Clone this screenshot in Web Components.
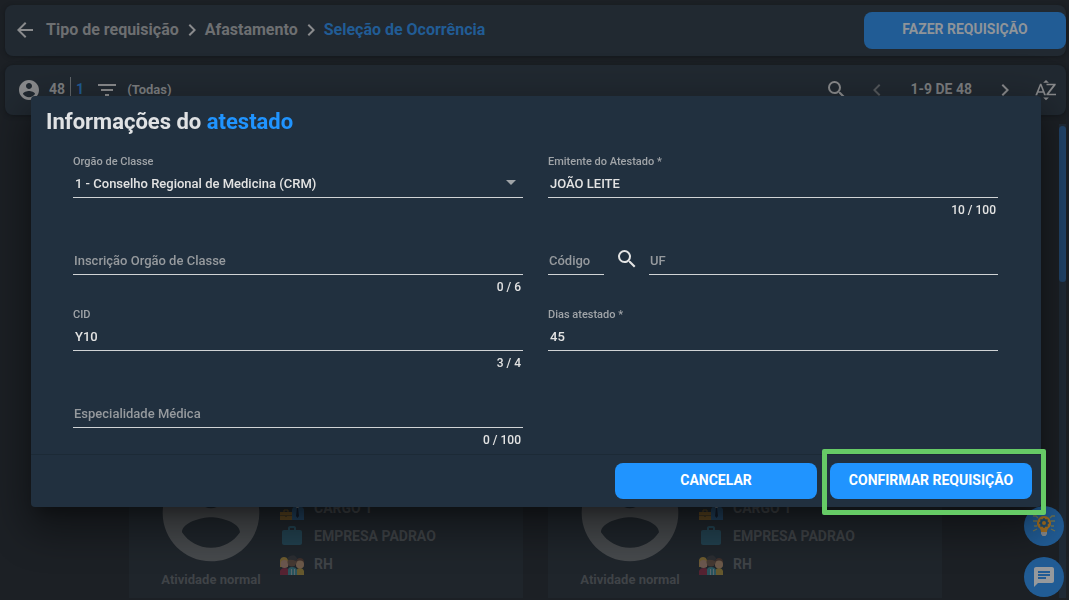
<!DOCTYPE html>
<html lang="pt-BR">
<head>
<meta charset="utf-8">
<meta name="viewport" content="width=device-width, initial-scale=1">
<title>Seleção de Ocorrência</title>
<style>
  html, body { margin: 0; height: 100%; overflow: hidden; background: #1c2025; }
  body {
    font-family: Roboto, "Liberation Sans", sans-serif;
    --bar: #212931; --muted: #6d6f71; --icon: #8a8b8d; --accent-dim: #215c95;
    --accent: #2094ff; --dialog: #21303f; --text: #e3e3e3;
  }
</style>
</head>
<body>
<app-page></app-page>
<script>
const define = (name, html, setup) => {
  const template = document.createElement('template');
  template.innerHTML = '<style>*{box-sizing:border-box}:host{display:block;box-sizing:border-box}button{font:inherit;cursor:pointer}</style>' + html;
  customElements.define(name, class extends HTMLElement {
    connectedCallback() {
      if (this.shadowRoot) return;
      this.attachShadow({ mode: 'open' }).append(template.content.cloneNode(true));
      if (setup) setup(this, this.shadowRoot);
    }
  });
};

const ICONS = {
  back: '<path d="M20 11H7.8l5.6-5.6L12 4l-8 8 8 8 1.4-1.4L7.8 13H20z"/>',
  right: '<path d="M10 6 8.6 7.4l4.6 4.6-4.6 4.6L10 18l6-6z"/>',
  left: '<path d="M15.4 7.4 14 6l-6 6 6 6 1.4-1.4L10.8 12z"/>',
  account: '<path d="M12 2C6.48 2 2 6.48 2 12s4.48 10 10 10 10-4.48 10-10S17.52 2 12 2zm0 3c1.66 0 3 1.34 3 3s-1.34 3-3 3-3-1.34-3-3 1.34-3 3-3zm0 14.2c-2.5 0-4.71-1.28-6-3.22.03-1.99 4-3.08 6-3.08 1.99 0 5.97 1.09 6 3.08-1.29 1.94-3.5 3.22-6 3.22z"/>',
  filter: '<path d="M10 18h4v-2h-4v2zM3 6v2h18V6H3zm3 7h12v-2H6v2z"/>',
  search: '<path d="M15.5 14h-.79l-.28-.27A6.47 6.47 0 0 0 16 9.5 6.5 6.5 0 1 0 9.5 16c1.61 0 3.09-.59 4.23-1.57l.27.28v.79l5 4.99L20.49 19l-4.99-5zm-6 0C7.01 14 5 11.99 5 9.5S7.01 5 9.5 5 14 7.01 14 9.5 11.99 14 9.5 14z"/>',
  sort: '<path d="M14.9 4.7H9.2L12 1.9zM9.2 19.5h5.7L12 22.3zM6 5.7h1.4L12 17.3h-1.9l-.9-2.5H4.1l-.9 2.5H1.3L6 5.7zm-1.3 7.5h3.9L6.7 8zM14.9 15.7H22v1.6h-9.6v-1.2l6.7-8.8h-6.6V5.7h9.2v1.2z"/>',
  chat: '<path d="M20 2H4c-1.1 0-2 .9-2 2v18l4-4h14c1.1 0 2-.9 2-2V4c0-1.1-.9-2-2-2zM6 9h12v2H6V9zm8 5H6v-2h8v2zm4-6H6V6h12v2z"/>',
  caret: '<path d="m7 10 5 5 5-5z"/>',
  company: '<path fill="#22414f" d="M4 6h4V4c0-1.300.900-2 2-2h4c1.100 0 2 .700 2 2v2h4c1.200 0 2 .800 2 2v11c0 1.200-.800 2-2 2H4c-1.200 0-2-.800-2-2V8c0-1.200.800-2 2-2zm6 0h4V4h-4z"/>',
  role: '<circle cx="17.500" cy="6" r="4" fill="#665345"/><path fill="#21405c" d="M12 24V14q0-3 4-4h3q5 1 5 4v10z"/><path fill="#69727a" d="m15 10 2.500 3 2.500-3-2.500-2z"/><path fill="#151d2c" d="m17 12-1 8 1.500 2 1.500-2-1-8z"/><path fill="#5b4520" d="M0 16h12v8H0z"/><path fill="none" stroke="#5b4520" d="M4 16v-2h4v2"/><path fill="#3e3422" d="M0 19h12v1H0zm5 0h2v2H5z"/>',
  team: '<path fill="#552332" d="M0 23v-4q1-3 5-3t4 3v4z"/><path fill="#66592e" d="M16 23v-4q1-3 4-3t4 3v4z"/><path fill="#2a545d" d="M8 23v-5q0-3 4-3t5 3v5z"/><path fill="#6b5a2f" d="M0 15V8q1-3 4-3t4 3v7z"/><path fill="#3e302c" d="M16 15V9q1-3 4-3t4 3v6z"/><circle cx="4.500" cy="12" r="4" fill="#6b574e"/><circle cx="20" cy="12.500" r="4" fill="#6b5949"/><circle cx="12" cy="10" r="4.500" fill="#453932"/><path fill="#2b2d31" d="M8 8q-1-3 2-4 5-2 6 1 2 1 0 4-4-2-8-1z"/><path fill="#5c676b" d="M11 17h1v6h-1zm3 0h1v6h-1z"/>',
  idea: '<g fill="none" stroke="#727553" stroke-width="1.300"><path d="M1 2h3l2 2M1 7h4M2 12h3M1 17l4-2M23 2h-3l-2 2M23 7h-4M22 12h-3M23 17l-4-2"/></g><path fill="#a46f20" d="M12 2a7 7 0 0 0-4.200 12.600q1.200 1.400 1.200 3.400h6q0-2 1.200-3.400A7 7 0 0 0 12 2z"/><circle cx="12" cy="9" r="3" fill="none" stroke="#214c6b" stroke-width="2"/><path stroke="#214c6b" stroke-width="1.500" d="M12 4v2m0 6v2M7 9h2m6 0h2M8.500 5.500 10 7m4 4 1.500 1.500m0-7L14 7m-4 4-1.500 1.500"/><path fill="#85888a" d="M9 18h6v2l-1.500 2h-3L9 20z"/>'
};

define('ui-icon',
  `<style>:host{display:inline-block;flex:none;width:24px;height:24px}svg{display:block;width:100%;height:100%;fill:currentColor}</style><svg viewBox="0 0 24 24" aria-hidden="true"></svg>`,
  (el, root) => { root.querySelector('svg').innerHTML = ICONS[el.getAttribute('name')]; });

define('ui-button',
  `<style>
    :host{position:relative;width:202px}
    button{display:block;width:100%;height:36px;padding:0 0 2px;border:0;border-radius:8px;background:var(--accent);color:#fff;font-size:14px;font-weight:700}
    :host([dim]) button{height:37px;padding-bottom:3px;background:var(--accent-dim);color:#8f9499}
    :host([highlight])::after{content:"";position:absolute;inset:-14px -14px -16px -8px;border:5px solid #66cb66;border-radius:2px;pointer-events:none}
  </style><button type="button"><slot></slot></button>`);

define('page-header',
  `<style>
    :host{display:flex;align-items:center;justify-content:space-between;height:51px;padding-left:8px;border-radius:8px;background:var(--bar);box-shadow:0 1px 4px #14181c}
    nav{display:flex;align-items:center;gap:1px;color:var(--muted);font-size:16px;font-weight:700;line-height:24px;padding-bottom:2px}
    a{color:inherit;text-decoration:none}
    a[aria-current]{color:var(--accent-dim)}
    ui-icon{color:var(--icon)}
    .back{display:flex;padding:0;border:0;background:none;margin-right:8px}
  </style>
  <nav aria-label="Navegação">
    <button class="back" type="button" aria-label="Voltar"><ui-icon name="back"></ui-icon></button>
    <a href="#tipo">Tipo de requisição</a><ui-icon name="right"></ui-icon>
    <a href="#afastamento">Afastamento</a><ui-icon name="right"></ui-icon>
    <a href="#ocorrencia" aria-current="page">Seleção de Ocorrência</a>
  </nav>
  <ui-button dim>FAZER REQUISIÇÃO</ui-button>`);

define('list-toolbar',
  `<style>
    :host{display:flex;align-items:center;justify-content:space-between;height:50px;padding:0 8px 0 12px;border-radius:8px;background:var(--bar);color:#7c7e80;font-size:14px;font-weight:700;box-shadow:0 1px 4px #14181c}
    div{display:flex;align-items:center}
    button{display:flex;padding:0;border:0;background:none;color:var(--icon)}
    span{padding-bottom:2px}
    .count{margin-left:8px;padding-right:5px;border-right:1px solid #63676b;line-height:24px}
    .selected{margin-left:5px;color:var(--accent-dim)}
    .filter{margin-left:11px}
    .name{margin-left:8px;font-size:13px}
    .off{color:#55595d}
    .left ui-icon{color:var(--icon)}
    .search{margin-right:16px}
    .range{margin:0 21px}
    .sort{margin-left:17px}
  </style>
  <div class="left"><ui-icon name="account"></ui-icon><span class="count">48</span><span class="selected">1</span>
    <button class="filter" type="button" aria-label="Filtrar"><ui-icon name="filter"></ui-icon></button><span class="name">(Todas)</span></div>
  <div><button class="search" type="button" aria-label="Buscar"><ui-icon name="search"></ui-icon></button>
    <button class="off" type="button" aria-label="Página anterior"><ui-icon name="left"></ui-icon></button>
    <span class="range">1-9 DE 48</span>
    <button type="button" aria-label="Próxima página"><ui-icon name="right"></ui-icon></button>
    <button class="sort" type="button" aria-label="Ordenar"><ui-icon name="sort"></ui-icon></button></div>`);

define('employee-card',
  `<style>
    :host{display:flex;gap:11px;align-items:end;height:150px;padding:0 24px 9px;background:#1f252b;color:#3f4347;font-weight:700}
    .person{display:flex;flex-direction:column;align-items:center;width:116px;font-size:13px;line-height:18px;white-space:nowrap}
    .person ui-icon{width:116px;height:116px;color:#46494c}
    ul{margin:0 0 11px;padding:0;list-style:none;font-size:14px}
    li{display:flex;align-items:center;gap:10px;height:28px}
  </style>
  <div class="person"><ui-icon name="account"></ui-icon><span>Atividade normal</span></div>
  <ul><li><ui-icon name="role"></ui-icon>CARGO 1</li><li><ui-icon name="company"></ui-icon>EMPRESA PADRAO</li><li><ui-icon name="team"></ui-icon>RH</li></ul>`);

define('form-field',
  `<style>
    :host{position:relative;color:var(--text);font-size:13px;font-weight:500}
    label{display:block;height:16px;color:#a0a4a8;font-size:11px;line-height:18px}
    input,select{display:block;width:100%;height:29px;margin:0;padding:0 2px;border:0;border-bottom:1px solid #d0d3d5;border-radius:0;outline:0;background:none;color:inherit;font:inherit;appearance:none}
    input:placeholder-shown{padding:0 1px}
    input::placeholder{color:#969a9e;opacity:1}
    output{display:block;padding-right:2px;font-size:12px;line-height:24px;text-align:right}
    ui-icon{position:absolute;right:0;top:17px;color:#a0a4a8;pointer-events:none}
  </style><label for="control"></label>`,
  (el, root) => {
    const get = name => el.getAttribute(name) || '';
    root.querySelector('label').textContent = get('label');
    const control = document.createElement(el.hasAttribute('select') ? 'select' : 'input');
    control.id = 'control';
    root.append(control);
    if (el.hasAttribute('select')) {
      control.add(new Option(get('value')));
      const caret = document.createElement('ui-icon');
      caret.setAttribute('name', 'caret');
      root.append(caret);
    } else {
      control.type = 'text';
      control.value = get('value');
      if (get('hint')) { control.placeholder = get('hint'); control.setAttribute('aria-label', get('hint')); }
    }
    if (get('count')) {
      const out = document.createElement('output');
      out.htmlFor = 'control';
      out.textContent = get('count');
      root.append(out);
    }
  });

define('certificate-dialog',
  `<style>
    :host{background:var(--dialog);border-radius:4px;box-shadow:0 11px 15px -7px #0005,0 24px 38px 3px #0004,0 9px 46px 8px #0003}
    h2{margin:0;padding:10px 15px 0;color:#e0e2e4;font-size:22px;font-weight:700;line-height:32px}
    h2 span{color:var(--accent)}
    form{display:grid;grid-template-columns:1fr 1fr;grid-template-rows:77px 76px 77px 71px;column-gap:25px;padding:15px 43px 0 42px}
    .pair{display:grid;grid-template-columns:56px auto 1fr;column-gap:10px}
    .pair button{width:25px;height:24px;margin-top:17px;padding:0;border:0;background:none;color:#e3e3e3}
    footer{display:flex;justify-content:end;gap:13px;padding:8px 9px;border-top:1px solid #1c2a36}
  </style>
  <h2>Informações do <span>atestado</span></h2>
  <form>
    <form-field select label="Orgão de Classe" value="1 - Conselho Regional de Medicina (CRM)"></form-field>
    <form-field label="Emitente do Atestado *" value="JOÃO LEITE" count="10 / 100"></form-field>
    <form-field hint="Inscrição Orgão de Classe" count="0 / 6"></form-field>
    <div class="pair"><form-field hint="Código"></form-field><button type="button" aria-label="Pesquisar UF"><ui-icon name="search"></ui-icon></button><form-field hint="UF"></form-field></div>
    <form-field label="CID" value="Y10" count="3 / 4"></form-field>
    <form-field label="Dias atestado *" value="45"></form-field>
    <form-field hint="Especialidade Médica" count="0 / 100"></form-field>
  </form>
  <footer><ui-button>CANCELAR</ui-button><ui-button highlight>CONFIRMAR REQUISIÇÃO</ui-button></footer>`);

define('floating-actions',
  `<style>
    :host{display:grid;gap:11px}
    button{display:grid;place-items:center;width:40px;height:40px;padding:0;border:0;border-radius:50%;background:var(--accent-dim);color:#96999c}
  </style>
  <button type="button" aria-label="Dicas"><ui-icon name="idea"></ui-icon></button>
  <button type="button" aria-label="Conversar"><ui-icon name="chat"></ui-icon></button>`);

define('app-page',
  `<style>
    main{display:flex;flex-direction:column;height:100vh;padding:5px 3px 2px 5px}
    list-toolbar{margin-top:9px}
    .content{display:flex;flex:1;margin-top:9px}
    .cards{display:grid;flex:1;grid-template-columns:repeat(2,minmax(0,394px));justify-content:center;align-content:end;gap:25px;margin-right:-7px}
    .scroll{width:7px;padding-top:2px;background:#1f2a36}
    .scroll::before{content:"";display:block;height:33%;border-radius:4px;background:#21446a}
    .layer{position:fixed;inset:0;padding:96px 28px 0 31px;z-index:2}
    floating-actions{position:fixed;right:5px;bottom:3px;z-index:1}
  </style>
  <main>
    <page-header></page-header>
    <list-toolbar></list-toolbar>
    <div class="content"><div class="cards"><employee-card></employee-card><employee-card></employee-card></div><div class="scroll"></div></div>
  </main>
  <floating-actions></floating-actions>
  <div class="layer"><certificate-dialog role="dialog" aria-label="Informações do atestado"></certificate-dialog></div>`);
</script>
</body>
</html>
